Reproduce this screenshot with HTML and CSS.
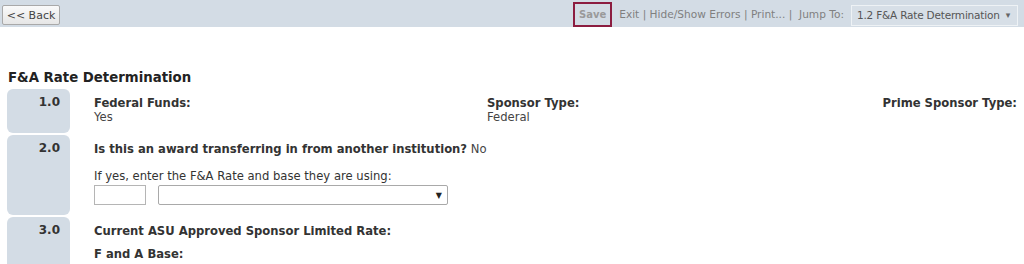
FILE: index.html
```html
<!DOCTYPE html>
<html>
<head>
<meta charset="utf-8">
<link rel="stylesheet" href="styles.css">
</head>
<body>
<div class="toolbar">
  <button class="back-btn">&lt;&lt; Back</button>
  <div class="tools">
    <span class="save">Save</span>
    <span class="links">Exit | Hide/Show Errors | Print... | &nbsp;Jump To:</span>
    <div class="jump"><span>1.2 F&amp;A Rate Determination</span><span class="caret">&#9662;</span></div>
  </div>
</div>
<h1 class="title">F&amp;A Rate Determination</h1>
<div class="rows">
  <div class="row row1">
    <div class="num">1.0</div>
    <div class="content cols">
      <div class="field"><div class="label">Federal Funds:</div><div class="value">Yes</div></div>
      <div class="field"><div class="label">Sponsor Type:</div><div class="value">Federal</div></div>
      <div class="field right"><div class="label">Prime Sponsor Type:</div></div>
    </div>
  </div>
  <div class="row row2">
    <div class="num">2.0</div>
    <div class="content">
      <div class="question"><span class="label">Is this an award transferring in from another institution?</span> <span class="value">No</span></div>
      <div class="hint">If yes, enter the F&amp;A Rate and base they are using:</div>
      <div class="inputs">
        <div class="text-input"></div>
        <div class="select-input"><span class="arrow">&#9660;</span></div>
      </div>
    </div>
  </div>
  <div class="row row3">
    <div class="num">3.0</div>
    <div class="content">
      <div class="label q3">Current ASU Approved Sponsor Limited Rate:</div>
      <div class="label q3b">F and A Base:</div>
    </div>
  </div>
</div>
</body>
</html>
```

FILE: styles.css
```css
html, body {
  margin: 0;
  padding: 0;
  background: #fff;
  font-family: "DejaVu Sans", Verdana, sans-serif;
  color: #333;
}
.toolbar {
  height: 27px;
  background: #d3dce5;
  display: flex;
  align-items: center;
  justify-content: space-between;
  padding: 0 6px 0 2px;
}
.back-btn {
  height: 20px;
  width: 58px;
  margin-top: 3px;
  padding: 0;
  font-family: "DejaVu Sans", Verdana, sans-serif;
  font-size: 11px;
  color: #444;
  background: linear-gradient(#fafafa, #e6e6e6);
  border: 1px solid #a9a9a9;
  border-radius: 2px;
}
.tools {
  display: flex;
  align-items: center;
  font-size: 10.6px;
  color: #888;
  height: 27px;
  white-space: nowrap;
}
.save {
  box-sizing: border-box;
  height: 25px;
  width: 39px;
  margin-top: 1px;
  border: 2px solid #8c1d40;
  display: flex;
  align-items: center;
  justify-content: center;
  font-weight: bold;
  font-size: 10px;
  color: #9a9a9a;
  margin-right: 7px;
}
.links {
  margin-right: 7px;
  color: #808080;
}
.jump {
  box-sizing: border-box;
  height: 21px;
  width: 167px;
  margin-top: 3px;
  border: 1px solid #eef2f5;
  background: #d7dfe7;
  font-size: 10.5px;
  color: #555;
  display: flex;
  align-items: center;
  justify-content: space-between;
  padding: 0 7px 0 5px;
  letter-spacing: -0.2px;
}
.caret {
  font-size: 9px;
  color: #666;
}
.title {
  font-size: 13.3px;
  font-weight: bold;
  color: #222;
  margin: 43px 0 0 8px;
  line-height: 16px;
}
.rows {
  margin-top: 3px;
  display: flex;
  flex-direction: column;
  gap: 2px;
}
.row {
  display: flex;
}
.num {
  width: 63px;
  margin-left: 7px;
  background: #d3dce5;
  border-radius: 6px;
  box-sizing: border-box;
  padding: 6px 10px 0 0;
  text-align: right;
  font-size: 12px;
  font-weight: bold;
  color: #333;
  flex-shrink: 0;
}
.row1 { height: 44px; }
.row2 { height: 80px; }
.row3 { height: 60px; }
.content {
  flex: 1;
  padding-left: 24px;
  padding-top: 7px;
  font-size: 11.6px;
}
.cols {
  display: grid;
  grid-template-columns: 393px 1fr auto;
  padding-right: 7px;
}
.label {
  font-weight: bold;
  color: #333;
}
.value {
  color: #444;
}
.right { text-align: right; }
.hint {
  margin-top: 13px;
  color: #333;
}
.inputs {
  display: flex;
  gap: 12px;
  margin-top: 2px;
}
.text-input {
  width: 50px;
  height: 18px;
  border: 1px solid #b5b5b5;
  background: #fff;
}
.select-input {
  width: 283px;
  height: 18px;
  border: 1px solid #a9a9a9;
  border-radius: 2px;
  background: #fff;
  display: flex;
  align-items: center;
  justify-content: flex-end;
  padding-right: 5px;
}
.arrow {
  font-size: 8px;
  color: #222;
}
.q3b { margin-top: 9px; }
```
